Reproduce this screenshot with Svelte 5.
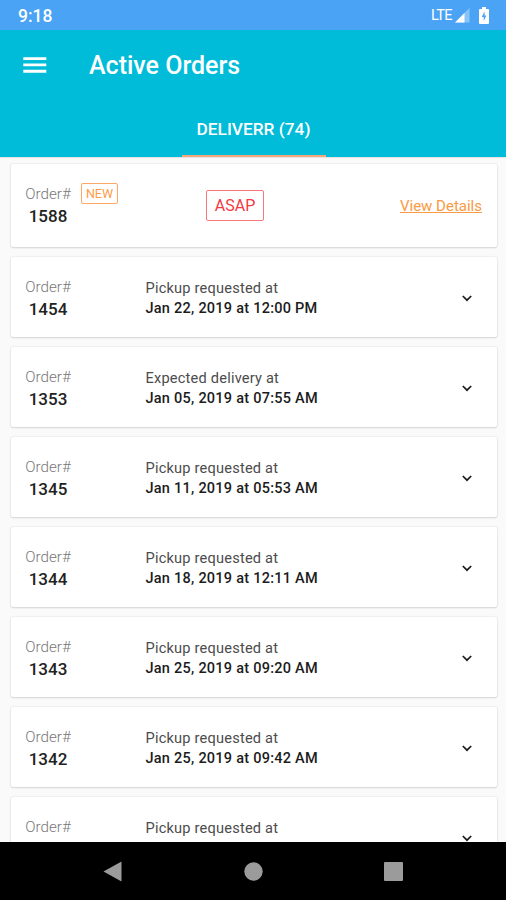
<script>
	const title = 'Active Orders';
	const tab = { label: 'DELIVERR', count: 74 };

	const orders = [
		{ id: '1588', isNew: true },
		{ id: '1454', label: 'Pickup requested at', date: 'Jan 22, 2019 at 12:00 PM' },
		{ id: '1353', label: 'Expected delivery at', date: 'Jan 05, 2019 at 07:55 AM' },
		{ id: '1345', label: 'Pickup requested at', date: 'Jan 11, 2019 at 05:53 AM' },
		{ id: '1344', label: 'Pickup requested at', date: 'Jan 18, 2019 at 12:11 AM' },
		{ id: '1343', label: 'Pickup requested at', date: 'Jan 25, 2019 at 09:20 AM' },
		{ id: '1342', label: 'Pickup requested at', date: 'Jan 25, 2019 at 09:42 AM' },
		{ id: '', label: 'Pickup requested at', date: '' }
	];
</script>

<div class="screen">
	<div class="status">
		<span class="time">9:18</span>
		<span class="network">LTE</span>
		<svg class="signal" width="15" height="15" viewBox="0 0 15 15">
			<path d="M14.5 0V14.500H0z" fill="#fff" opacity="0.35" />
			<path d="M9.500 5V14.500H0z" fill="#fff" />
		</svg>
		<svg class="battery" width="10" height="17" viewBox="0 0 10 17">
			<path
				d="M3 0h4v2h2q1 0 1 1v13q0 1-1 1H1q-1 0-1-1V3q0-1 1-1h2z"
				fill="#fff"
			/>
			<path d="M5.600 4.500L2.700 10h2v4l2.700-5.500H5.600z" fill="#4aa3f5" />
		</svg>
	</div>

	<header>
		<div class="toolbar">
			<svg class="menu" width="24" height="16" viewBox="0 0 24 16">
				<path d="M0.300 1.600h23M0.300 7.900h23M0.300 14.200h23" stroke="#fff" stroke-width="2.900" />
			</svg>
			<h1>{title}</h1>
		</div>
		<div class="tabs">
			<div class="tab">{tab.label} ({tab.count})</div>
		</div>
	</header>

	<main>
		{#each orders as order}
			<div class="card" class:fresh={order.isNew}>
				<div class="order">
					<span class="hash">Order#</span>
					<strong class="id">{order.id}</strong>
				</div>
				{#if order.isNew}
					<span class="new">NEW</span>
					<span class="asap">ASAP</span>
					<span class="details">View Details</span>
				{:else}
					<div class="when">
						<span class="label">{order.label}</span>
						<strong class="date">{order.date}</strong>
					</div>
					<svg class="chevron" width="10" height="7" viewBox="0 0 10 7">
						<path d="M0.800 1L5 5.200L9.200 1" fill="none" stroke="#1c1c1c" stroke-width="1.700" />
					</svg>
				{/if}
			</div>
		{/each}
	</main>

	<nav>
		<svg width="19" height="21" viewBox="0 0 19 21">
			<path d="M18.500 0.500v20L0.500 10.500z" fill="#9b9b9b" />
		</svg>
		<svg width="19" height="19" viewBox="0 0 19 19">
			<circle cx="9.500" cy="9.500" r="9.200" fill="#9b9b9b" />
		</svg>
		<svg width="19" height="19" viewBox="0 0 19 19">
			<rect width="19" height="19" rx="1" fill="#9b9b9b" />
		</svg>
	</nav>
</div>

<style>
	:global(body) {
		margin: 0;
	}

	.screen {
		display: flex;
		flex-direction: column;
		width: 506px;
		height: 900px;
		overflow: hidden;
		background: #fafafa;
		font-family: Roboto, sans-serif;
	}

	.screen * {
		box-sizing: border-box;
	}

	svg {
		display: block;
		flex: none;
	}

	.status {
		display: flex;
		align-items: center;
		flex: none;
		height: 30px;
		padding: 0 17px 0 18px;
		background: #4aa3f5;
		color: #fff;
	}

	.time {
		flex: 1;
		padding-top: 2px;
		font-size: 17.5px;
		font-weight: 500;
	}

	.network {
		margin-right: 3px;
		font-size: 14.5px;
		letter-spacing: -0.6px;
	}

	.signal {
		margin-right: 9px;
	}

	header {
		flex: none;
		height: 127px;
		background: #00bcd9;
		color: #fff;
		box-shadow: 0 1px 1px rgba(0, 0, 0, 0.08);
	}

	.toolbar {
		display: flex;
		align-items: center;
		height: 70px;
		padding-left: 23px;
	}

	.menu {
		margin-top: -1px;
	}

	h1 {
		margin: 2px 0 0 42px;
		font-size: 25px;
		font-weight: 500;
		line-height: 30px;
	}

	.tabs {
		display: flex;
		justify-content: center;
		padding-left: 1px;
	}

	.tab {
		width: 144px;
		height: 57px;
		border-bottom: 2px solid #f2a77c;
		font-size: 17.3px;
		font-weight: 500;
		line-height: 58px;
		text-align: center;
		white-space: nowrap;
	}

	main {
		display: flex;
		flex: 1;
		flex-direction: column;
		gap: 10px;
		min-height: 0;
		overflow: hidden;
		padding: 7px 9px 0 11px;
	}

	.card {
		display: flex;
		flex: none;
		height: 80px;
		padding: 20px 15px 0 13px;
		border-radius: 2px;
		background: #fff;
		box-shadow: 0 0 2px rgba(0, 0, 0, 0.14), 0 1px 2px rgba(0, 0, 0, 0.12);
	}

	.card.fresh {
		height: 83px;
	}

	.order {
		display: flex;
		flex-direction: column;
		align-items: center;
		width: 48px;
		margin-right: 73.5px;
	}

	.fresh .order {
		margin-right: 9px;
	}

	.hash {
		color: #777;
		font-size: 15.2px;
		font-weight: 300;
		line-height: 20px;
	}

	.id {
		color: #222;
		font-size: 17px;
		font-weight: 500;
		line-height: 24px;
	}

	.new,
	.asap {
		border: 1px solid;
		border-radius: 2px;
		text-align: center;
	}

	.new {
		width: 37px;
		height: 21px;
		margin-top: -1px;
		border-color: #ffa766;
		color: #ff9a4a;
		font-size: 12.5px;
		line-height: 20px;
	}

	.asap {
		width: 58px;
		height: 31px;
		margin: 6px 0 0 88px;
		border-color: #f8777c;
		color: #f23a43;
		font-size: 16px;
		line-height: 30px;
	}

	.details {
		margin: 12px 0 0 auto;
		color: #f99a45;
		font-size: 15px;
		line-height: 20px;
		text-decoration: underline;
	}

	.when {
		display: flex;
		flex: 1;
		flex-direction: column;
		padding-top: 1px;
	}

	.label {
		color: #4c4c4c;
		font-size: 14.6px;
		letter-spacing: 0.2px;
		line-height: 20px;
	}

	.date {
		color: #1c1c1c;
		font-size: 14.5px;
		font-weight: 500;
		letter-spacing: 0.25px;
		line-height: 21px;
	}

	.chevron {
		margin: 18px 10px 0 0;
	}

	nav {
		display: flex;
		flex: none;
		align-items: center;
		justify-content: space-between;
		height: 58px;
		padding: 0 103px;
		background: #000;
	}
</style>
